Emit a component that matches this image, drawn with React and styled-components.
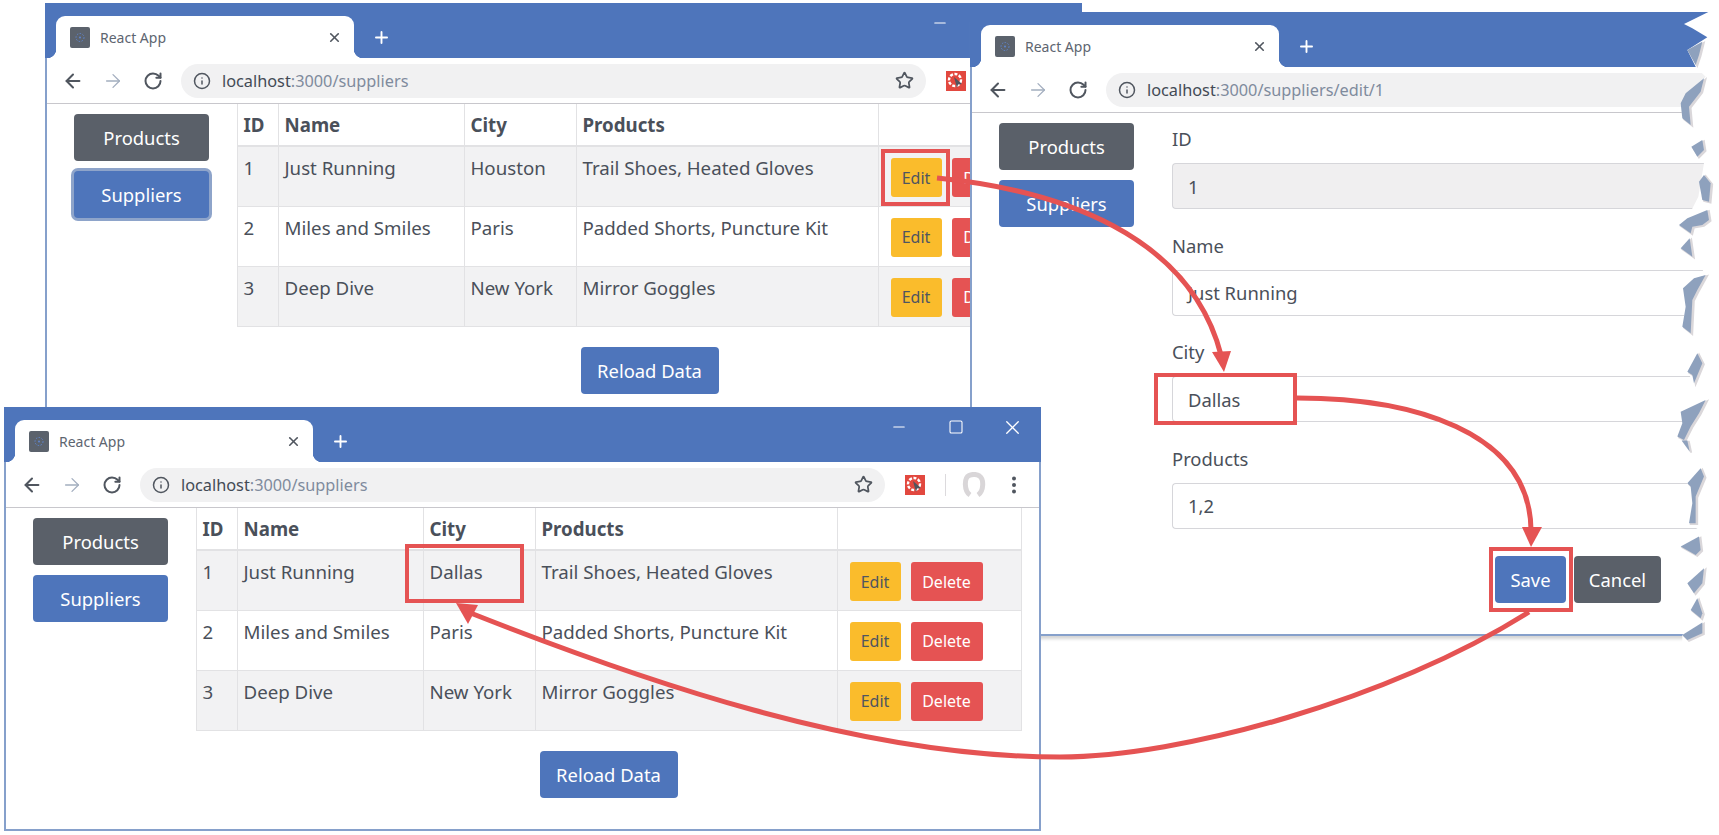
import styled, { createGlobalStyle } from "styled-components";
import { ArrowLeft, ArrowRight, RotateCw, Info, Star, X, Plus, Minus, Square } from "lucide-react";

const BLUE = "#4e75bb";
const RED = "#e55353";
const SLATE = "#5a6069";
const TEXT = "#4a505a";

const GlobalStyle = createGlobalStyle`
  html, body { margin: 0; padding: 0; background: #fff; }
  body { font-family: "Noto Sans", "Open Sans", sans-serif; color: ${TEXT}; }
`;

const Stage = styled.div`
  position: relative;
  width: 1719px;
  height: 835px;
  overflow: hidden;
  background: #fff;
`;

const BrowserWindow = styled.div`
  position: absolute;
  left: ${(p) => p.$x}px;
  top: ${(p) => p.$y}px;
  width: ${(p) => p.$w}px;
  height: ${(p) => p.$h}px;
  box-sizing: border-box;
  display: flex;
  flex-direction: column;
  background: #fff;
  border: 2px solid #86a0cb;
  border-top: none;
  box-shadow: ${(p) => (p.$shadow ? "0 6px 3px -3px #d6d6d6" : "none")};
`;

const TabStrip = styled.div`
  display: flex;
  align-items: flex-end;
  height: 55px;
  margin: 0 -2px;
  padding-left: 11px;
  background: ${BLUE};
  flex: none;
`;

const Tab = styled.div`
  position: relative;
  display: flex;
  align-items: center;
  width: 298px;
  height: 42px;
  box-sizing: border-box;
  padding: 0 12px 0 14px;
  background: #fff;
  border-radius: 9px 9px 0 0;
  &::before, &::after {
    content: "";
    position: absolute;
    bottom: 0;
    width: 9px;
    height: 9px;
  }
  &::before {
    left: -9px;
    background: radial-gradient(circle at 0 0, ${BLUE} 9px, #fff 9.5px);
  }
  &::after {
    right: -9px;
    background: radial-gradient(circle at 100% 0, ${BLUE} 9px, #fff 9.5px);
  }
`;

const Favicon = styled.svg`
  width: 20px;
  height: 21px;
  flex: none;
`;

const TabTitle = styled.span`
  margin-left: 10px;
  font-size: 14px;
  color: #5d6570;
  flex: 1;
`;

const NewTab = styled.div`
  display: flex;
  align-items: center;
  justify-content: center;
  width: 30px;
  height: 42px;
  margin-left: 12px;
  color: #fff;
`;

const WindowControls = styled.div`
  display: flex;
  margin-left: auto;
  align-self: flex-start;
`;

const ControlButton = styled.div`
  display: flex;
  align-items: center;
  justify-content: center;
  width: 57px;
  height: 40px;
  color: #fff;
`;

const Toolbar = styled.div`
  display: flex;
  align-items: center;
  height: 46px;
  flex: none;
  box-sizing: border-box;
  padding-left: 6px;
  border-bottom: 1px solid #c8c7cc;
`;

const NavButton = styled.div`
  display: flex;
  align-items: center;
  justify-content: center;
  width: 40px;
  height: 40px;
  color: ${(p) => (p.$faded ? "#a3aebf" : "#50565f")};
`;

const AddressBar = styled.div`
  display: flex;
  align-items: center;
  box-sizing: border-box;
  height: 34px;
  margin-left: 8px;
  padding: 0 12px;
  background: #f1f1f2;
  border-radius: 17px 0 0 17px;
  flex: 1;
  min-width: 0;
  ${(p) => p.$full && `
    flex: none;
    width: 745px;
    border-radius: 17px;
  `}
`;

const Url = styled.span`
  margin-left: 11px;
  font-size: 16.3px;
  color: #7f8b9d;
  flex: 1;
  white-space: nowrap;
  b {
    font-weight: 400;
    color: #434a55;
  }
`;

const ExtensionIcon = styled.svg`
  width: 20px;
  height: 20px;
  margin-left: 20px;
  flex: none;
`;

const Divider = styled.div`
  width: 1px;
  height: 22px;
  margin-left: 20px;
  background: #dcdadd;
`;

const ProfileIcon = styled.svg`
  width: 24px;
  height: 26px;
  margin-left: 16px;
  flex: none;
`;

const MenuDots = styled.svg`
  width: 20px;
  height: 20px;
  margin-left: 18px;
  flex: none;
`;

const Body = styled.div`
  display: flex;
  flex: 1;
  min-height: 0;
`;

const Sidebar = styled.div`
  display: flex;
  flex-direction: column;
  gap: 10px;
  width: 190px;
  box-sizing: border-box;
  padding: 10px 0 0 27px;
  flex: none;
`;

const Button = styled.div`
  display: flex;
  align-items: center;
  justify-content: center;
  box-sizing: border-box;
  height: 47px;
  width: ${(p) => p.$w}px;
  border-radius: 4px;
  font-size: 18.4px;
  color: #fff;
  background: ${(p) => (p.$dark ? SLATE : BLUE)};
  box-shadow: ${(p) => (p.$focus ? "0 0 0 3px #8ea4ca" : "none")};
`;

const Main = styled.div`
  width: 825px;
  flex: none;
  display: flex;
  flex-direction: column;
  align-items: center;
`;

const Table = styled.table`
  width: 825px;
  table-layout: fixed;
  border-collapse: collapse;
  font-size: 18.7px;
  col:nth-child(1) { width: 41px; }
  col:nth-child(2) { width: 186px; }
  col:nth-child(3) { width: 112px; }
  col:nth-child(4) { width: 302px; }
  col:nth-child(5) { width: 184px; }
`;

const Th = styled.th`
  height: 42px;
  padding: 0 0 0 6px;
  box-sizing: border-box;
  text-align: left;
  font-weight: 700;
  border: 1px solid #e2e2e4;
  border-bottom-width: 2px;
  border-top: none;
`;

const Row = styled.tr`
  background: ${(p) => (p.$odd ? "#f2f2f3" : "#fff")};
`;

const Td = styled.td`
  height: 60px;
  padding: 8px 0 0 6px;
  box-sizing: border-box;
  vertical-align: top;
  line-height: 26px;
  border: 1px solid #e2e2e4;
`;

const ActionCell = styled(Td)`
  padding: 11px 0 0 12px;
`;

const Actions = styled.div`
  display: flex;
  gap: 10px;
`;

const SmallButton = styled.div`
  display: flex;
  align-items: center;
  justify-content: center;
  width: ${(p) => p.$w}px;
  height: 39px;
  border-radius: 3px;
  font-size: 16px;
  color: ${(p) => (p.$danger ? "#fff" : "#4f5560")};
  background: ${(p) => (p.$danger ? RED : "#fabc2c")};
`;

const ReloadRow = styled.div`
  margin-top: 20px;
`;

const FormPane = styled.div`
  flex: 1;
  min-width: 0;
  padding: 14px 0 0 10px;
`;

const Field = styled.div`
  margin-bottom: 24.5px;
`;

const Label = styled.label`
  display: block;
  height: 24px;
  line-height: 24px;
  margin-bottom: 12px;
  font-size: 18.4px;
`;

const Input = styled.div`
  display: flex;
  align-items: center;
  box-sizing: border-box;
  height: 46px;
  padding-left: 15px;
  font-size: 18.4px;
  border: 1px solid #d6d6da;
  border-right: none;
  border-radius: 4px 0 0 4px;
  background: ${(p) => (p.$disabled ? "#f0eff0" : "#fff")};
`;

const FormButtons = styled.div`
  display: flex;
  justify-content: flex-end;
  gap: 8px;
  margin-top: 27px;
  padding-right: 56px;
`;

const Overlay = styled.svg`
  position: absolute;
  left: 0;
  top: 0;
  width: 1719px;
  height: 835px;
  pointer-events: none;
`;

const Callout = styled.div`
  position: absolute;
  left: ${(p) => p.$x}px;
  top: ${(p) => p.$y}px;
  width: ${(p) => p.$w}px;
  height: ${(p) => p.$h}px;
  box-sizing: border-box;
  border: 4px solid ${RED};
`;

const suppliers = [
  { id: 1, name: "Just Running", products: "Trail Shoes, Heated Gloves" },
  { id: 2, name: "Miles and Smiles", city: "Paris", products: "Padded Shorts, Puncture Kit" },
  { id: 3, name: "Deep Dive", city: "New York", products: "Mirror Goggles" },
];

// torn right edge of the edit window, traced in 3x crop units from x=1659
const tornEdge = "148,36 75,72 100,85 145,112 85,150 110,200 140,230 65,310 70,350 95,380 100,420 97,440 115,470 135,490 118,590 85,655 60,675 95,700 65,745 100,770 125,800 140,825 72,865 80,920 70,980 95,1030 115,1060 85,1115 105,1150 130,1190 65,1235 70,1270 55,1310 70,1325 92,1365 125,1395 85,1450 95,1500 90,1570 120,1590 65,1640 110,1665 125,1695 85,1750 105,1780 120,1790 95,1830 125,1865 70,1905 70,1930 200,1930 200,36";

const shards = [
  "85,150 130,125 120,165 110,195",
  "65,310 80,280 135,235 125,275 90,320 95,375 70,355",
  "97,440 130,420 135,450 115,470",
  "120,545 135,525 155,550 150,605 130,600",
  "85,655 145,630 150,660 130,675 100,680 95,700 60,675",
  "65,745 92,715 100,770",
  "72,865 105,835 140,825 115,870 100,900 95,1000 70,980 80,920",
  "85,1115 115,1060 130,1090 105,1150 100,1125",
  "65,1235 140,1200 120,1240 95,1280 75,1320 55,1310 70,1270",
  "68,1322 85,1322 92,1355",
  "85,1450 125,1405 135,1430 110,1490 110,1570 90,1570 100,1510 95,1460",
  "65,1640 120,1610 125,1650 110,1665",
  "85,1750 135,1705 130,1750 105,1780",
  "95,1830 115,1795 130,1840 125,1855",
  "70,1905 130,1868 130,1900 85,1920",
];

const BrowserChrome = ({ url, full }) => (
  <>
    <TabStrip>
      <Tab>
        <Favicon viewBox="0 0 20 21">
          <rect width="20" height="21" rx="2" fill="#5b626c" />
          <circle cx="10" cy="10.5" r="4" fill="none" stroke="#5f86d0" strokeWidth="1" strokeDasharray="1.5 1.5" />
          <circle cx="10" cy="10.5" r="1" fill="#5f86d0" />
        </Favicon>
        <TabTitle>React App</TabTitle>
        <X size={15} strokeWidth={2.6} color="#50565f" />
      </Tab>
      <NewTab>
        <Plus size={19} strokeWidth={2.4} />
      </NewTab>
      {full && (
        <WindowControls>
          <ControlButton><Minus size={18} strokeWidth={1.4} /></ControlButton>
          <ControlButton><Square size={16} strokeWidth={1.6} /></ControlButton>
          <ControlButton><X size={23} strokeWidth={1.4} /></ControlButton>
        </WindowControls>
      )}
    </TabStrip>
    <Toolbar>
      <NavButton><ArrowLeft size={22} strokeWidth={2.2} /></NavButton>
      <NavButton $faded><ArrowRight size={22} strokeWidth={1.4} /></NavButton>
      <NavButton><RotateCw size={20} strokeWidth={2.4} /></NavButton>
      <AddressBar $full={full}>
        <Info size={18} strokeWidth={2} color="#50565f" />
        <Url><b>localhost</b>{url}</Url>
        {full && <Star size={19} strokeWidth={2.2} color="#50565f" />}
      </AddressBar>
      {full && (
        <>
          <ExtensionIcon viewBox="0 0 20 20">
            <rect width="20" height="20" fill="#e2483f" />
            <circle cx="9" cy="9" r="6" fill="none" stroke="#fff" strokeWidth="2.4" strokeDasharray="3 1.5" />
            <path d="M8 6 L16 13 L12 13.5 L11 17 Z" fill="#50565f" />
          </ExtensionIcon>
          <Divider />
          <ProfileIcon viewBox="0 0 24 26">
            <path d="M8 23 C2 19 2 6 7 3.5 C10 2 15 2 17.5 4 C22 7 22 19 16 23" fill="none" stroke="#d9d6d8" strokeWidth="5" />
          </ProfileIcon>
          <MenuDots viewBox="0 0 20 20">
            <circle cx="10" cy="3.5" r="2" fill="#50565f" />
            <circle cx="10" cy="10" r="2" fill="#50565f" />
            <circle cx="10" cy="16.5" r="2" fill="#50565f" />
          </MenuDots>
        </>
      )}
    </Toolbar>
  </>
);

const SideNav = ({ focus }) => (
  <Sidebar>
    <Button $dark $w={135}>Products</Button>
    <Button $w={135} $focus={focus}>Suppliers</Button>
  </Sidebar>
);

const SuppliersWindow = ({ x, y, city, focus, full }) => (
  <BrowserWindow $x={x} $y={y} $w={1037} $h={424}>
    <BrowserChrome url=":3000/suppliers" full={full} />
    <Body>
      <SideNav focus={focus} />
      <Main>
        <Table>
          <colgroup><col /><col /><col /><col /><col /></colgroup>
          <thead>
            <tr>
              <Th>ID</Th>
              <Th>Name</Th>
              <Th>City</Th>
              <Th>Products</Th>
              <Th />
            </tr>
          </thead>
          <tbody>
            {suppliers.map((s, i) => (
              <Row key={s.id} $odd={i % 2 === 0}>
                <Td>{s.id}</Td>
                <Td>{s.name}</Td>
                <Td>{s.city || city}</Td>
                <Td>{s.products}</Td>
                <ActionCell>
                  <Actions>
                    <SmallButton $w={51}>Edit</SmallButton>
                    <SmallButton $w={72} $danger>Delete</SmallButton>
                  </Actions>
                </ActionCell>
              </Row>
            ))}
          </tbody>
        </Table>
        <ReloadRow>
          <Button $w={138}>Reload Data</Button>
        </ReloadRow>
      </Main>
    </Body>
  </BrowserWindow>
);

const EditWindow = () => (
  <BrowserWindow $x={970} $y={12} $w={749} $h={624} $shadow>
    <BrowserChrome url=":3000/suppliers/edit/1" />
    <Body>
      <SideNav />
      <FormPane>
        <Field>
          <Label>ID</Label>
          <Input $disabled>1</Input>
        </Field>
        <Field>
          <Label>Name</Label>
          <Input>Just Running</Input>
        </Field>
        <Field>
          <Label>City</Label>
          <Input>Dallas</Input>
        </Field>
        <Field>
          <Label>Products</Label>
          <Input>1,2</Input>
        </Field>
        <FormButtons>
          <Button $w={71}>Save</Button>
          <Button $w={87} $dark>Cancel</Button>
        </FormButtons>
      </FormPane>
    </Body>
  </BrowserWindow>
);

const App = () => (
  <Stage>
    <GlobalStyle />
    <SuppliersWindow x={45} y={3} city="Houston" focus full />
    <EditWindow />
    <Overlay viewBox="0 0 1719 835">
      <g transform="translate(1659 0) scale(0.3333)">
        <polygon points={tornEdge} fill="#fff" />
        {shards.map((s) => (
          <polygon key={s} points={s} fill="#dad7da" stroke="#dad7da" strokeWidth="5" transform="translate(5 3)" />
        ))}
        {shards.map((s) => (
          <polygon key={s} points={s} fill="#8ea1bd" />
        ))}
      </g>
    </Overlay>
    <SuppliersWindow x={4} y={407} city="Dallas" full />
    <Callout $x={881} $y={149} $w={69} $h={57} />
    <Callout $x={1154} $y={373} $w={143} $h={52} />
    <Callout $x={1489} $y={547} $w={84} $h={65} />
    <Callout $x={405} $y={544} $w={119} $h={59} />
    <Overlay viewBox="0 0 1719 835">
      <g fill="none" stroke={RED} strokeWidth="5">
        <path d="M937 178 C1060 190 1190 235 1221 355" />
        <path d="M1297 398 C1410 398 1530 430 1531 530" />
        <path d="M1529 612 C1390 700 1180 757 1060 757 C860 757 640 680 468 612" />
      </g>
      <g fill={RED}>
        <polygon points="1212,352 1231,351 1224,372" />
        <polygon points="1522,527 1542,527 1531,547" />
        <polygon points="456,603 478,605 468,624" />
      </g>
    </Overlay>
  </Stage>
);

export default App;
